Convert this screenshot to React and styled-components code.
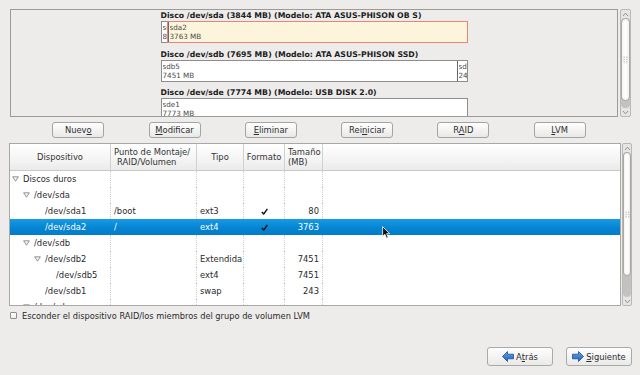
import React from 'react';
import styled, { createGlobalStyle } from 'styled-components';

const GlobalStyle = createGlobalStyle`
  html, body { margin: 0; padding: 0; background: #edeceb; }
  body { font-family: "DejaVu Sans", "Noto Sans", sans-serif; color: #222; }
  #root { width: 640px; height: 375px; overflow: hidden; }
`;

const Page = styled.div`
  position: relative;
  width: 640px;
  height: 375px;
  box-sizing: border-box;
  padding-top: 9px;
  display: flex;
  flex-direction: column;
  font-size: 8.4px;
  background: #edeceb;
`;

const PaneRow = styled.div`
  display: flex;
  height: ${(p) => p.$h}px;
  padding-left: ${(p) => p.$left}px;
  gap: ${(p) => p.$gap}px;
  margin-top: ${(p) => p.$mt || 0}px;
`;

const DiskViewport = styled.div`
  width: 608px;
  height: 100%;
  box-sizing: border-box;
  border: 1px solid #9d9b97;
  overflow: hidden;
  display: flex;
  justify-content: center;
`;

const DiskList = styled.div`
  width: 307px;
  padding-top: 1px;
  display: flex;
  flex-direction: column;
  gap: 6.5px;
`;

const DiskBlock = styled.div`
  display: flex;
  flex-direction: column;
`;

const DiskLabel = styled.div`
  height: 10px;
  line-height: 10px;
  font-size: 7.75px;
  font-weight: bold;
  white-space: nowrap;
  color: #1c1c1c;
`;

const Bar = styled.div`
  display: flex;
  height: 22px;
  box-sizing: border-box;
  border: 1px solid #8d8d8d;
  background: #fff;
`;

const Seg = styled.div`
  position: relative;
  flex: ${(p) => (p.$w ? `0 0 ${p.$w}px` : '1 1 auto')};
  box-sizing: border-box;
  overflow: hidden;
  text-overflow: clip;
  white-space: nowrap;
  font-size: 7.2px;
  line-height: 9px;
  padding: 1px 0 0 1px;
  color: #4a4a4a;
  border-left: ${(p) => (p.$first ? 'none' : '1px solid #6a6a6a')};
  background: ${(p) => (p.$selected ? '#fdf5db' : '#fff')};
  box-shadow: ${(p) => (p.$selected ? '0 0 0 1px #e6867a' : 'none')};
`;

const SegLine = styled.div`
  overflow: hidden;
  white-space: nowrap;
`;

const ButtonBox = styled.div`
  display: flex;
  justify-content: space-evenly;
  height: 16px;
  margin: 5px 10px 0 8px;
`;

const PushButton = styled.button`
  width: 52px;
  height: 16px;
  box-sizing: border-box;
  padding: 0;
  border: 1px solid #a4a4a4;
  border-radius: 3px;
  background: linear-gradient(#fefefe, #e8e8e7);
  font-family: "DejaVu Sans", sans-serif;
  font-size: 8.4px;
  color: #2e2e2e;
`;

const U = styled.span`
  text-decoration: underline;
  text-underline-offset: 1px;
`;

const TableFrame = styled.div`
  width: 612px;
  height: 100%;
  box-sizing: border-box;
  border: 1px solid #a8a8a8;
  background: #fff;
  overflow: hidden;
  display: flex;
  flex-direction: column;
`;

const cols = '101px 86px 47px 41px 38px 1fr';

const HeaderRow = styled.div`
  display: grid;
  grid-template-columns: ${cols};
  height: 27px;
  flex: 0 0 27px;
  box-sizing: border-box;
  border-bottom: 1px solid #c9c9c9;
  background: linear-gradient(#ffffff, #f4f4f4 60%, #eaeaea);
`;

const HeaderCell = styled.div`
  display: flex;
  flex-direction: column;
  justify-content: center;
  align-items: ${(p) => (p.$center ? 'center' : 'flex-start')};
  padding: 0 ${(p) => (p.$center ? 0 : 3)}px;
  border-right: ${(p) => (p.$last ? 'none' : '1px solid #d0d0d0')};
  line-height: 10px;
  color: #333;
  white-space: nowrap;
  overflow: hidden;
`;

const Indent = styled.span`
  padding-left: ${(p) => p.$px}px;
`;

const Body = styled.div`
  flex: 1;
  overflow: hidden;
`;

const Row = styled.div`
  display: grid;
  grid-template-columns: ${cols};
  height: 16px;
  background: ${(p) => (p.$selected ? 'linear-gradient(#189be6, #0584d2 55%, #037dc8)' : 'transparent')};
  color: ${(p) => (p.$selected ? '#fff' : '#2a2a2a')};
`;

const Cell = styled.div`
  display: flex;
  align-items: center;
  justify-content: ${(p) => (p.$align === 'right' ? 'flex-end' : p.$align === 'center' ? 'center' : 'flex-start')};
  padding: 0 3px;
  border-right: ${(p) => (p.$last ? 'none' : p.$selected ? '1px solid transparent' : '1px dotted #cfcfcf')};
  white-space: nowrap;
  overflow: hidden;
`;

const TreeCell = styled(Cell)`
  padding-left: ${(p) => 2 + p.$level * 11}px;
`;

const Expander = styled.span`
  display: inline-flex;
  width: 11px;
  flex: 0 0 11px;
  align-items: center;
`;

const Track = styled.div`
  width: ${(p) => p.$w}px;
  height: 100%;
  box-sizing: border-box;
  border: 1px solid #bab8b4;
  border-radius: 2px;
  background: #e6e5e3;
  display: flex;
  flex-direction: column;
`;

const ScrollArrow = styled.div`
  height: 8px;
  flex: 0 0 8px;
  display: flex;
  align-items: center;
  justify-content: center;
`;

const Trough = styled.div`
  flex: 1;
  border-radius: 4px;
  background: #c4c2be;
  display: flex;
  flex-direction: column;
`;

const Thumb = styled.div`
  height: ${(p) => p.$h}px;
  box-sizing: border-box;
  border: 1px solid #a9a7a3;
  border-radius: 5px;
  background: linear-gradient(90deg, #f4f4f4, #ffffff 50%, #f0f0f0);
  display: flex;
  align-items: center;
  justify-content: center;
`;

const CheckRow = styled.label`
  display: flex;
  align-items: center;
  gap: 5px;
  height: 11px;
  margin-top: 4px;
  padding-left: 10px;
  font-size: 8.25px;
  color: #2a2a2a;
  white-space: nowrap;
`;

const CheckBox = styled.span`
  width: 7px;
  height: 7px;
  box-sizing: border-box;
  border: 1px solid #8e8e8e;
  border-radius: 1px;
  background: linear-gradient(#ffffff, #ececec);
`;

const Footer = styled.div`
  display: flex;
  justify-content: flex-end;
  gap: 13px;
  margin-top: 26px;
  padding-right: 8px;
`;

const NavButton = styled.button`
  width: 66px;
  height: 19px;
  box-sizing: border-box;
  padding: 0;
  border: 1px solid #a9a9a9;
  border-radius: 3px;
  background: linear-gradient(#fefefe, #e9e9e8);
  display: flex;
  align-items: center;
  justify-content: center;
  gap: 2px;
  font-family: "DejaVu Sans", sans-serif;
  font-size: 8.4px;
  color: #2e2e2e;
`;

const Cursor = styled.svg`
  position: absolute;
  left: 382px;
  top: 226px;
`;

const Chevron = ({ up }) => (
  <svg width="7" height="5" viewBox="0 0 7 5">
    <polyline
      points={up ? '1,4 3.5,1.2 6,4' : '1,1 3.5,3.8 6,1'}
      fill="none"
      stroke="#8a8a8a"
      strokeWidth="0.9"
    />
  </svg>
);

const Grip = () => (
  <svg width="5" height="7" viewBox="0 0 5 7">
    {[0, 1, 2].map((r) =>
      [0, 1].map((c) => (
        <rect key={`${r}-${c}`} x={0.5 + c * 2.5} y={0.5 + r * 2.3} width="1.4" height="1.4" fill="#c6c6c6" />
      ))
    )}
  </svg>
);

const Scrollbar = ({ w, thumb }) => (
  <Track $w={w}>
    <ScrollArrow>
      <Chevron up />
    </ScrollArrow>
    <Trough>
      <Thumb $h={thumb}>
        <Grip />
      </Thumb>
    </Trough>
    <ScrollArrow>
      <Chevron />
    </ScrollArrow>
  </Track>
);

const Triangle = () => (
  <svg width="7" height="6" viewBox="0 0 7 6">
    <polygon points="0.6,0.8 6.4,0.8 3.5,5.2" fill="#f4f4f4" stroke="#7a7a7a" strokeWidth="0.8" />
  </svg>
);

const Check = () => (
  <svg width="7" height="7" viewBox="0 0 7 7">
    <path d="M0.8 4 L2.7 6 L6.4 0.9" fill="none" stroke="#111" strokeWidth="1.4" strokeLinejoin="round" />
  </svg>
);

const NavArrow = ({ dir }) => (
  <svg width="12" height="11" viewBox="0 0 12 11">
    <defs>
      <linearGradient id={`g-${dir}`} x1="0" y1="0" x2="0" y2="1">
        <stop offset="0" stopColor="#6aa6e8" />
        <stop offset="1" stopColor="#1d5eb6" />
      </linearGradient>
    </defs>
    <polygon
      points={
        dir === 'left'
          ? '0.5,5.5 5.5,0.5 5.5,3.2 11.5,3.2 11.5,7.8 5.5,7.8 5.5,10.5'
          : '11.5,5.5 6.5,0.5 6.5,3.2 0.5,3.2 0.5,7.8 6.5,7.8 6.5,10.5'
      }
      fill={`url(#g-${dir})`}
      stroke="#1b4d93"
      strokeWidth="0.8"
      strokeLinejoin="round"
    />
  </svg>
);

const rows = [
  { name: 'Discos duros', level: 0, exp: true },
  { name: '/dev/sda', level: 1, exp: true },
  { name: '/dev/sda1', level: 2, mount: '/boot', type: 'ext3', fmt: true, size: '80' },
  { name: '/dev/sda2', level: 2, mount: '/', type: 'ext4', fmt: true, size: '3763', selected: true },
  { name: '/dev/sdb', level: 1, exp: true },
  { name: '/dev/sdb2', level: 2, exp: true, type: 'Extendida', size: '7451' },
  { name: '/dev/sdb5', level: 3, type: 'ext4', size: '7451' },
  { name: '/dev/sdb1', level: 2, type: 'swap', size: '243' },
  { name: '/dev/sde', level: 1, exp: true },
];

const disks = [
  {
    label: 'Disco /dev/sda (3844 MB) (Modelo: ATA ASUS-PHISON OB S)',
    parts: [
      { name: 'sda1', size: '80 MB', w: 6 },
      { name: 'sda2', size: '3763 MB', selected: true },
    ],
  },
  {
    label: 'Disco /dev/sdb (7695 MB) (Modelo: ATA ASUS-PHISON SSD)',
    parts: [
      { name: 'sdb5', size: '7451 MB' },
      { name: 'sdb1', size: '243 MB', w: 10 },
    ],
  },
  {
    label: 'Disco /dev/sde (7774 MB) (Modelo: USB DISK 2.0)',
    parts: [{ name: 'sde1', size: '7773 MB' }],
  },
];

export default function App() {
  return (
    <>
      <GlobalStyle />
      <Page>
        <PaneRow $h={108} $left={10} $gap={2}>
          <DiskViewport>
            <DiskList>
              {disks.map((d) => (
                <DiskBlock key={d.label}>
                  <DiskLabel>{d.label}</DiskLabel>
                  <Bar>
                    {d.parts.map((p, i) => (
                      <Seg key={p.name} $first={i === 0} $w={p.w} $selected={p.selected}>
                        <SegLine>{p.name}</SegLine>
                        <SegLine>{p.size}</SegLine>
                      </Seg>
                    ))}
                  </Bar>
                </DiskBlock>
              ))}
            </DiskList>
          </DiskViewport>
          <Scrollbar w={11} thumb={83} />
        </PaneRow>

        <ButtonBox>
          <PushButton>
            Nuev<U>o</U>
          </PushButton>
          <PushButton>
            <U>M</U>odificar
          </PushButton>
          <PushButton>
            <U>E</U>liminar
          </PushButton>
          <PushButton>
            Rei<U>n</U>iciar
          </PushButton>
          <PushButton>
            R<U>A</U>ID
          </PushButton>
          <PushButton>
            <U>L</U>VM
          </PushButton>
        </ButtonBox>

        <PaneRow $h={163} $left={9} $gap={1} $mt={5}>
          <TableFrame>
            <HeaderRow>
              <HeaderCell $center>Dispositivo</HeaderCell>
              <HeaderCell>
                <span>Punto de Montaje/</span>
                <Indent $px={3}>RAID/Volumen</Indent>
              </HeaderCell>
              <HeaderCell $center>Tipo</HeaderCell>
              <HeaderCell $center>Formato</HeaderCell>
              <HeaderCell>
                <span>Tamaño</span>
                <span>(MB)</span>
              </HeaderCell>
              <HeaderCell $last />
            </HeaderRow>
            <Body>
              {rows.map((r) => (
                <Row key={r.name} $selected={r.selected}>
                  <TreeCell $level={r.level} $selected={r.selected}>
                    <Expander>{r.exp ? <Triangle /> : null}</Expander>
                    {r.name}
                  </TreeCell>
                  <Cell $selected={r.selected}>{r.mount || ''}</Cell>
                  <Cell $selected={r.selected}>{r.type || ''}</Cell>
                  <Cell $selected={r.selected} $align="center">
                    {r.fmt ? <Check /> : null}
                  </Cell>
                  <Cell $selected={r.selected} $align="right">
                    {r.size || ''}
                  </Cell>
                  <Cell $last />
                </Row>
              ))}
            </Body>
          </TableFrame>
          <Scrollbar w={10} thumb={124} />
        </PaneRow>

        <CheckRow>
          <CheckBox />
          Esconder el dispositivo RAID/los miembros del grupo de volumen LVM
        </CheckRow>

        <Footer>
          <NavButton>
            <NavArrow dir="left" />
            <span>
              A<U>t</U>rás
            </span>
          </NavButton>
          <NavButton>
            <NavArrow dir="right" />
            <span>
              <U>S</U>iguiente
            </span>
          </NavButton>
        </Footer>

        <Cursor width="9" height="13" viewBox="0 0 9 13">
          <path
            d="M0.6 0.6 L0.6 10.4 L2.9 8.3 L4.6 12.2 L6.2 11.5 L4.6 7.7 L7.6 7.7 Z"
            fill="#111"
            stroke="#fff"
            strokeWidth="0.8"
            strokeLinejoin="round"
          />
        </Cursor>
      </Page>
    </>
  );
}
